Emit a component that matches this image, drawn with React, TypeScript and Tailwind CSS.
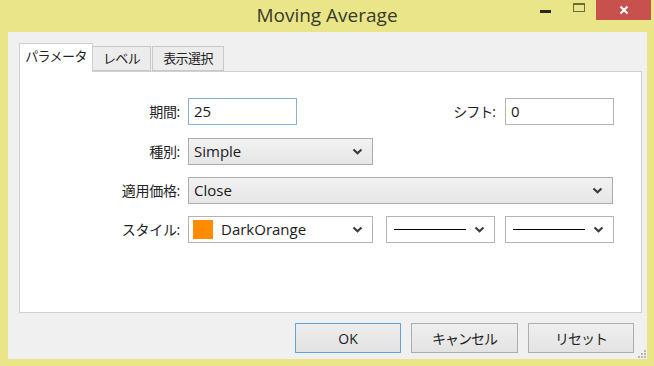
import React from "react";

const font = "font-['Open_Sans','Noto_Sans_CJK_JP',sans-serif]";

function Chevron() {
  return (
    <svg width="11" height="7" viewBox="0 0 11 7" className="shrink-0">
      <polyline points="1.5,1.5 5.5,5.2 9.5,1.5" fill="none" stroke="#3c3c3c" strokeWidth="2.2" />
    </svg>
  );
}

function Select({ w, children }: { w: string; children: React.ReactNode }) {
  return (
    <div
      className={`${w} h-[27px] flex items-center pl-[5px] pr-[9px] border border-[#acacac] bg-gradient-to-b from-[#f2f2f2] to-[#e6e6e6] text-[15px] text-[#1a1a1a]`}
    >
      <div className="flex-1 flex items-center min-w-0">{children}</div>
      <Chevron />
    </div>
  );
}

function Label({ children }: { children: React.ReactNode }) {
  return <div className="w-[161px] text-right text-[14px] text-[#222] pr-[1px] tracking-[-0.3px]">{children}</div>;
}

export default function App() {
  return (
    <div className={`w-[654px] h-[366px] bg-[#e9e588] flex flex-col ${font}`}>
      {/* title bar */}
      <div className="h-[32px] flex items-start relative">
        <div className="absolute left-0 right-0 top-[1px] text-center text-[19px] text-[#3a3a2a]">
          Moving Average
        </div>
        <div className="ml-auto flex items-start">
          <div className="w-[11px] h-[3px] bg-[#2a2a1c] mt-[10px]" />
          <div className="w-[12px] h-[9px] border border-[#6b6a3a] border-t-2 ml-[22px] mt-[3px]" />
          <div className="w-[55px] h-[20px] bg-[#c9514d] ml-[11px] mr-[3px] flex items-center justify-center">
            <svg width="10" height="10" viewBox="0 0 10 10">
              <path d="M1.5 1.5 L8.5 8.5 M8.5 1.5 L1.5 8.5" stroke="#fff" strokeWidth="2" />
            </svg>
          </div>
        </div>
      </div>

      {/* client area */}
      <div className="flex-1 ml-[8px] mr-[7px] mb-[7px] bg-[#f0f0f0] pt-[11px] pl-[11px] pr-[5px] flex flex-col relative">
        {/* tabs */}
        <div className="flex items-end h-[28px] relative z-10 text-[13px] text-[#222] tracking-[-0.6px]">
          <div className="w-[74px] h-[29px] bg-white border border-[#d0d0d0] border-b-0 flex items-center justify-center -mb-px pb-[2px]">
            パラメータ
          </div>
          <div className="w-[58px] h-[25px] bg-[#ececec] border border-[#c8c8c8] border-l-0 flex items-center justify-center">
            レベル
          </div>
          <div className="w-[72px] h-[25px] bg-[#ececec] border border-[#c8c8c8] ml-[1px] flex items-center justify-center">
            表示選択
          </div>
        </div>

        {/* panel */}
        <div className="h-[242px] bg-white border border-[#d0d0d0] pt-[26px] flex flex-col gap-[13px]">
          <div className="flex items-center h-[27px]">
            <Label>期間:</Label>
            <div className="ml-[7px] w-[109px] h-[27px] border border-[#86b2d8] flex items-center pl-[5px] text-[15px] text-[#1a1a1a]">
              25
            </div>
            <div className="w-[198px] text-right text-[14px] text-[#222] tracking-[-1px]">シフト:</div>
            <div className="ml-[10px] w-[109px] h-[27px] border border-[#b4b4b4] flex items-center pl-[5px] text-[15px] text-[#1a1a1a]">
              0
            </div>
          </div>

          <div className="flex items-center h-[27px]">
            <Label>種別:</Label>
            <div className="ml-[7px]">
              <Select w="w-[185px]">Simple</Select>
            </div>
          </div>

          <div className="flex items-center h-[27px] -mt-px">
            <Label>適用価格:</Label>
            <div className="ml-[7px]">
              <Select w="w-[425px]">Close</Select>
            </div>
          </div>

          <div className="flex items-center h-[27px] -mt-px">
            <Label>スタイル:</Label>
            <div className="ml-[7px] flex">
              <div className="w-[185px] h-[27px] flex items-center pl-[4px] pr-[9px] border border-[#b4b4b4] bg-white text-[15px] text-[#1a1a1a]">
                <div className="w-[20px] h-[19px] bg-[#ff8c00]" />
                <div className="flex-1 ml-[8px]">DarkOrange</div>
                <Chevron />
              </div>
              <div className="ml-[13px] w-[109px] h-[27px] flex items-center pl-[7px] pr-[9px] border border-[#b4b4b4] bg-white">
                <div className="w-[72px] h-px bg-black" />
                <div className="flex-1" />
                <Chevron />
              </div>
              <div className="ml-[10px] w-[109px] h-[27px] flex items-center pl-[7px] pr-[9px] border border-[#b4b4b4] bg-white">
                <div className="w-[72px] h-px bg-black" />
                <div className="flex-1" />
                <Chevron />
              </div>
            </div>
          </div>
        </div>

        {/* buttons */}
        <div className="flex justify-end gap-[10px] mt-[10px] mr-[8px] text-[14px] text-[#222]">
          <div className="w-[106px] h-[30px] border border-[#5fa3dd] bg-gradient-to-b from-[#ededed] to-[#e2e2e2] flex items-center justify-center">
            OK
          </div>
          <div className="w-[107px] h-[30px] border border-[#adadad] bg-gradient-to-b from-[#efefef] to-[#e3e3e3] flex items-center justify-center tracking-[-1px]">
            キャンセル
          </div>
          <div className="w-[106px] h-[30px] border border-[#adadad] bg-gradient-to-b from-[#efefef] to-[#e3e3e3] flex items-center justify-center tracking-[-1px]">
            リセット
          </div>
        </div>

        {/* size grip */}
        <svg width="8" height="8" viewBox="0 0 8 8" className="absolute right-[1px] bottom-[1px]">
          <rect x="6" y="0" width="2" height="2" fill="#b8b8b8" />
          <rect x="3" y="3" width="2" height="2" fill="#b8b8b8" />
          <rect x="6" y="3" width="2" height="2" fill="#b8b8b8" />
          <rect x="0" y="6" width="2" height="2" fill="#b8b8b8" />
          <rect x="3" y="6" width="2" height="2" fill="#b8b8b8" />
          <rect x="6" y="6" width="2" height="2" fill="#b8b8b8" />
        </svg>
      </div>
    </div>
  );
}
